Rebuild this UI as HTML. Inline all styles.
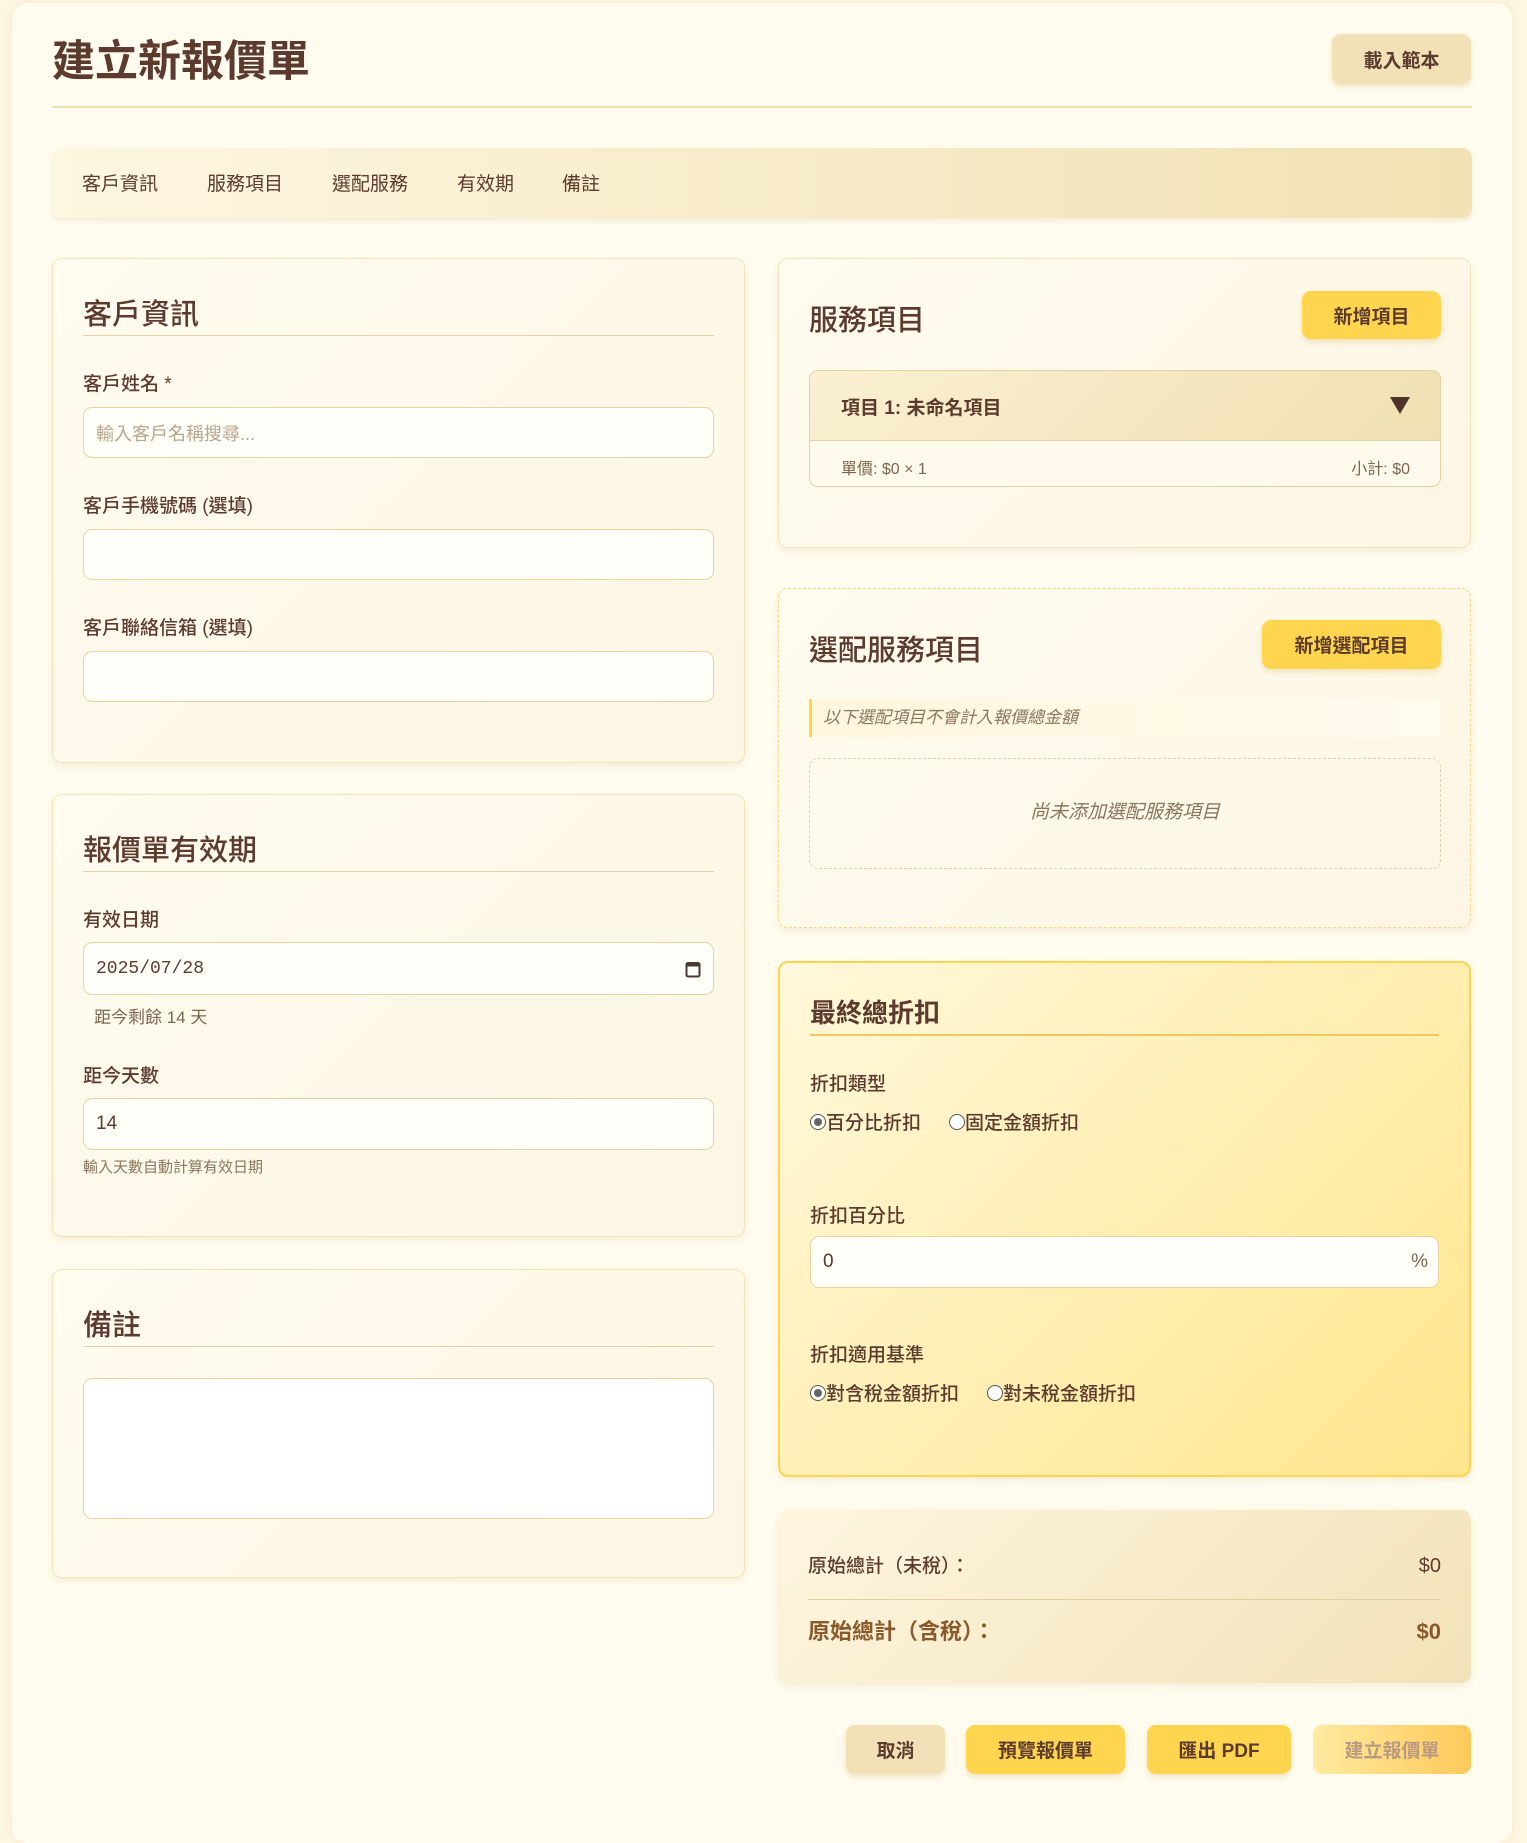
<!DOCTYPE html>
<html><head><meta charset="utf-8"><style>
*{box-sizing:border-box;margin:0;padding:0}
body{width:1527px;height:1823px;background:#fdf6e3;font-family:"Liberation Sans","Noto Sans CJK TC",sans-serif;color:#5c3b2e;position:relative;overflow:hidden}
.wrap{position:absolute;left:12px;top:3px;width:1500px;height:1840px;background:#fffcef;border-radius:16px;box-shadow:0 0 10px rgba(230,200,130,.25)}
.a{position:absolute}
.card{position:absolute;background:linear-gradient(135deg,#fffbee,#fdf6e4);border:1px solid #f3e3bb;border-radius:10px;box-shadow:0 3px 8px rgba(200,170,110,.2)}
.ct{position:absolute;font-size:29px;font-weight:500;left:30px}
.rule{position:absolute;left:30px;right:30px;height:1px;background:#e8d0a5}
.lbl{position:absolute;left:30px;font-size:19px;font-weight:500}
.inp{position:absolute;left:30px;right:30px;background:#fffef8;border:1px solid #ecd2a0;border-radius:9px;font-size:18px;padding-left:12px;display:flex;align-items:center}
.btn{position:absolute;border-radius:9px;display:flex;align-items:center;justify-content:center;font-size:19px;font-weight:600;background:#ffd54f;box-shadow:0 3px 6px rgba(200,160,60,.25)}
.radio{display:inline-block;width:16px;height:16px;border:1.5px solid #555;border-radius:50%;vertical-align:-1px;background:#fff;position:relative}
.radio.on::after{content:"";position:absolute;left:2.5px;top:2.5px;width:8px;height:8px;border-radius:50%;background:#666}
.row{position:absolute;left:30px;right:30px;display:flex;justify-content:space-between;align-items:baseline}
</style></head><body>
<div class="wrap"></div>
<div class="a" style="left:52px;top:36px;font-size:43px;font-weight:700;line-height:52px">建立新報價單</div>
<div class="btn" style="left:1332px;top:34px;width:139px;height:50px;background:#f2e1b6;font-size:19px">載入範本</div>
<div class="a" style="left:52px;top:106px;width:1420px;height:2px;background:#f0e0b0"></div>
<div class="a" style="left:52px;top:148px;width:1420px;height:70px;border-radius:10px;background:linear-gradient(90deg,#fdf6e0,#f1e1b4);box-shadow:0 3px 6px rgba(200,170,110,.2)"></div>
<div class="a" style="top:173px;left:82px;font-size:19px;line-height:24px">客戶資訊</div>
<div class="a" style="top:173px;left:207px;font-size:19px;line-height:24px">服務項目</div>
<div class="a" style="top:173px;left:332px;font-size:19px;line-height:24px">選配服務</div>
<div class="a" style="top:173px;left:457px;font-size:19px;line-height:24px">有效期</div>
<div class="a" style="top:173px;left:562px;font-size:19px;line-height:24px">備註</div>

<div class="card" style="left:52px;top:258px;width:693px;height:505px">
<div class="ct" style="top:32px">客戶資訊</div><div class="rule" style="top:76px"></div>
<div class="lbl" style="top:110px">客戶姓名 *</div>
<div class="inp" style="top:148px;height:51px;color:#b8a58c">輸入客戶名稱搜尋...</div>
<div class="lbl" style="top:232px">客戶手機號碼 (選填)</div>
<div class="inp" style="top:270px;height:51px"></div>
<div class="lbl" style="top:354px">客戶聯絡信箱 (選填)</div>
<div class="inp" style="top:392px;height:51px"></div>
</div>

<div class="card" style="left:52px;top:794px;width:693px;height:443px">
<div class="ct" style="top:32px">報價單有效期</div><div class="rule" style="top:76px"></div>
<div class="lbl" style="top:110px">有效日期</div>
<div class="inp" style="top:147px;height:53px;font-family:'Liberation Mono',monospace;font-size:18px">2025/07/28<svg style="position:absolute;right:12px;top:17px" width="16" height="18" viewBox="0 0 16 18"><rect x="1.5" y="3" width="13" height="13.5" rx="1.5" fill="none" stroke="#4a3a33" stroke-width="2"/><rect x="1.5" y="3" width="13" height="3.5" fill="#4a3a33"/></svg></div>
<div class="a" style="left:41px;top:208px;font-size:17px;color:#7d6650">距今剩餘 14 天</div>
<div class="lbl" style="top:266px">距今天數</div>
<div class="inp" style="top:303px;height:52px;font-size:19px">14</div>
<div class="a" style="left:30px;top:361px;font-size:15px;color:#8b765e">輸入天數自動計算有效日期</div>
</div>

<div class="card" style="left:52px;top:1269px;width:693px;height:309px">
<div class="ct" style="top:32px">備註</div><div class="rule" style="top:76px"></div>
<div class="inp" style="top:108px;height:141px;background:#fff"></div>
</div>

<div class="card" style="left:778px;top:258px;width:693px;height:290px">
<div class="ct" style="top:38px">服務項目</div>
<div class="btn" style="left:523px;top:32px;width:139px;height:48px">新增項目</div>
<div class="a" style="left:30px;top:111px;width:632px;height:117px;border:1px solid #e8cfa2;border-radius:9px;overflow:hidden;background:#fffaeb">
<div class="a" style="left:0;top:0;width:100%;height:70px;background:linear-gradient(135deg,#faf0d2,#f0dfb2);border-bottom:1px solid #e8cfa2"></div>
<div class="a" style="left:31px;top:22px;font-size:19px;font-weight:700">項目 1: 未命名項目</div>
<div class="a" style="right:30px;top:26px;width:0;height:0;border-left:10px solid transparent;border-right:10px solid transparent;border-top:17px solid #4d3329"></div>
<div class="a" style="left:31px;top:84px;font-size:16px;color:#7d6650">單價: $0 × 1</div>
<div class="a" style="right:30px;top:84px;font-size:16px;color:#7d6650">小計: $0</div>
</div>
</div>

<div class="card" style="left:778px;top:588px;width:693px;height:340px;border:1.5px dashed #f7d684">
<div class="ct" style="top:38px">選配服務項目</div>
<div class="btn" style="left:483px;top:31px;width:179px;height:49px">新增選配項目</div>
<div class="a" style="left:30px;top:110px;width:632px;height:38px;border-left:3px solid #ffd54f;background:linear-gradient(90deg,#fff6dc,#fffbee);font-style:italic;font-size:17px;color:#8b765e;padding-left:11px;line-height:38px">以下選配項目不會計入報價總金額</div>
<div class="a" style="left:30px;top:169px;width:632px;height:111px;border:1.5px dashed #e2cfb0;border-radius:9px;text-align:center;line-height:108px;font-style:italic;font-size:19px;color:#8b765e">尚未添加選配服務項目</div>
</div>

<div class="card" style="left:778px;top:961px;width:693px;height:516px;border:2px solid #fcd44f;background:linear-gradient(135deg,#fff8dc,#ffe68c)">
<div class="ct" style="top:30px;font-size:26px;font-weight:600">最終總折扣</div><div class="rule" style="top:71px;background:#f0c660;height:1.5px"></div>
<div class="lbl" style="top:106px">折扣類型</div>
<div class="a" style="left:30px;top:145px;font-size:19px;font-weight:500"><span class="radio on"></span>百分比折扣<span style="display:inline-block;width:28px"></span><span class="radio"></span>固定金額折扣</div>
<div class="lbl" style="top:238px">折扣百分比</div>
<div class="inp" style="top:273px;height:52px;background:#fffef8;font-size:19px">0<span style="position:absolute;right:10px;color:#7d6650">%</span></div>
<div class="lbl" style="top:377px">折扣適用基準</div>
<div class="a" style="left:30px;top:416px;font-size:19px;font-weight:500"><span class="radio on"></span>對含稅金額折扣<span style="display:inline-block;width:28px"></span><span class="radio"></span>對未稅金額折扣</div>
</div>

<div class="card" style="left:778px;top:1510px;width:693px;height:173px;border:none;background:linear-gradient(135deg,#fdf5df,#f2e2b8)">
<div class="row" style="top:41px;font-size:19px;font-weight:500"><span>原始總計（未稅）：</span><span style="font-size:20px">$0</span></div>
<div class="a" style="left:30px;right:30px;top:89px;height:1px;background:#e6cf9e"></div>
<div class="row" style="top:104px;font-size:22px;font-weight:700;color:#8b5a2b"><span>原始總計（含稅）：</span><span>$0</span></div>
</div>

<div class="btn" style="left:846px;top:1725px;width:99px;height:49px;background:#f2e1b6">取消</div>
<div class="btn" style="left:966px;top:1725px;width:159px;height:49px">預覽報價單</div>
<div class="btn" style="left:1147px;top:1725px;width:144px;height:49px">匯出 PDF</div>
<div class="btn" style="left:1313px;top:1725px;width:158px;height:49px;background:linear-gradient(90deg,#ffeaa0,#ffc95a);color:#b89a80;box-shadow:none">建立報價單</div>
</body></html>
